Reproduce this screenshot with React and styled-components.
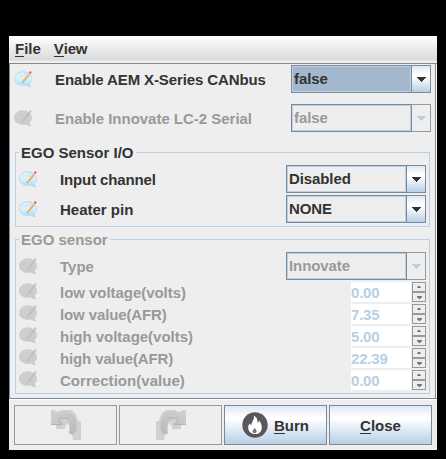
import React from "react";
import styled, { createGlobalStyle } from "styled-components";

const Global = createGlobalStyle`
  *{box-sizing:border-box}
  html,body{margin:0;background:#000}
  body{font:bold 15px/20px "Liberation Sans",Arial,sans-serif;color:#333;overflow:hidden}
`;
const Screen = styled.div`width:446px;height:459px;background:#000;padding:36px 9px 9px;overflow:hidden;`;
const Window = styled.main`width:428px;height:414px;background:#eee;display:flex;flex-direction:column;`;
const MenuBar = styled.nav`
  height:27px;flex:none;display:flex;gap:13px;padding:3px 0 0 6px;
  background:linear-gradient(#fff,#dadada 24px,#eee 25px);
`;
const Text = styled.span`
  white-space:nowrap;letter-spacing:${p => p.$ls || 0}px;color:${p => p.$off ? "#999" : "#333"};
`;
const Mnemonic = styled.span`border-bottom:1px solid #333;display:inline-block;line-height:15px;height:16px;`;
const Body = styled.section`
  width:428px;height:336px;flex:none;border:1px solid #7a8a99;border-right:0;
  box-shadow:inset -1px 0 #fff,inset -2px 0 #7a8a99,0 1px #fff;padding:1px 6px 0 4px;
`;
const Row = styled.div`
  display:flex;align-items:center;height:${p => p.$h || 28}px;margin-top:${p => p.$mt || 0}px;
`;
const IconCell = styled.div`width:41px;flex:none;display:flex;height:18px;margin-bottom:${p => p.$lift ? 2 : 0}px;`;
const Caption = styled.div`flex:1;display:flex;padding-top:2px;`;
const ComboBox = styled.div`
  width:140px;height:28px;flex:none;display:grid;grid-template-columns:120px 20px;
`;
const ComboValue = styled.div`
  border:1px solid #7a8a99;border-right:0;box-shadow:inset 0 0 0 1px #b8cfe5;
  background:${p => p.$focus ? "#a3b8cc" : "#eee"};color:${p => p.$off ? "#999" : "#333"};padding:3px 0 0 2px;
  letter-spacing:-.1px;
`;
const ComboArrow = styled.div`
  border:1px solid ${p => p.$off ? "#999" : "#7a8a99"};display:grid;place-items:center;
  border-left-color:#7a8a99;
  background:${p => p.$off ? "#eee" : "linear-gradient(#dde8f3,#fff 32%,#fff 42%,#b8cfe5)"};
`;
const Group = styled.fieldset`
  margin:${p => p.$mt}px 0 0 1px;min-width:0;width:415px;height:${p => p.$h}px;border:0;padding:0;
  display:flex;flex-direction:column;
`;
const GroupTop = styled.div`
  height:20px;flex:none;display:flex;align-items:center;gap:2px;
  &::before{content:"";width:4px;height:1px;background:#b8cfe5}
  &::after{content:"";flex:1;height:1px;background:#b8cfe5}
`;
const GroupTitle = styled(Text)`padding-top:2px;`;
const GroupBody = styled.div`
  border:1px solid #b8cfe5;border-top:0;flex:1;padding:0 3px;margin-top:-10px;
`;
const Field = styled.div`
  width:60px;height:20px;background:#fff;color:#b8cfe5;padding:1px 0 0 0;letter-spacing:-.2px;
`;
const Steps = styled.div`width:14px;height:20px;margin-left:1px;display:grid;grid-template-rows:10px 10px;`;
const Step = styled.div`border:1px solid #999;display:grid;place-items:center;`;
const Footer = styled.footer`display:flex;gap:2px;padding:5px 0 0 5px;margin-top:1px;`;
const Button = styled.div`
  width:103px;height:40px;display:flex;align-items:center;justify-content:center;gap:6px;
  border:1px solid ${p => p.$off ? "#999" : "#7a8a99"};
  background:${p => p.$off ? "#eee" : "linear-gradient(#dde8f3,#fff 30%,#fff 33%,#b8cfe5)"};
`;
const ButtonText = styled(Text)`padding-top:2px;`;

function NoteIcon({ off }) {
  const id = off ? "bubble-off" : "bubble-on";
  return (
    <svg width="18" height="18" viewBox="0 0 18 18">
      <defs>
        <linearGradient id={id} x1="0" y1="0" x2="0" y2="1">
          <stop offset="0" stopColor={off ? "#cdcdcd" : "#c5e3f0"} />
          <stop offset=".4" stopColor={off ? "#cfcfcf" : "#def3fb"} />
          <stop offset="1" stopColor={off ? "#c9c9c9" : "#a6dcf2"} />
        </linearGradient>
      </defs>
      <path d="M8.500 1.800C14 1.800 17.600 4.500 17.600 9c0 2.200-1 3.700-2.200 4.600.1 1.300.4 2.400 1.100 3.300-1.900-.1-3.200-.8-4.100-1.600C5.600 16.500.4 13.500.4 9 .4 4.500 4 1.800 8.500 1.800Z" fill={`url(#${id})`} stroke={off ? "#cbcbcb" : "#b3d9e8"} strokeWidth=".7" />
      <path d="M4 5c2-1.500 4-1.800 6-1.500" fill="none" stroke={off ? "#d5d5d5" : "#f5fcff"} />
      <path d="m8.500 12.400.9-2.700 4.400-5.300 1.600 1.200-4.500 5.300Z" fill={off ? "#bdbdbd" : "#eba641"} />
      <path d="m10 10 4.200-5.100" stroke={off ? "#c3c3c3" : "#ffd078"} strokeWidth=".7" />
      <path d="m13.800 4.400 1-1.300 1.600 1.200-1 1.300Z" fill={off ? "#bdbdbd" : "#c5ccd2"} />
      <path d="m14.800 2.900 1.300-1.900 1.600 1.300-1.300 1.800Z" fill={off ? "#bfbfbf" : "#df5265"} />
      <path d="M8 12h1v1H8Z" fill={off ? "#b4b4b4" : "#777"} />
    </svg>
  );
}

function TurnIcon({ flip }) {
  const id = flip ? "turn-right" : "turn-left";
  return (
    <svg width="30" height="30" viewBox="0 0 30 30">
      <defs>
        <linearGradient id={id} x1="0" y1="0" x2=".6" y2="1">
          <stop offset="0" stopColor="#d0d0d0" />
          <stop offset=".5" stopColor="#c6c6c6" />
          <stop offset="1" stopColor="#bcbcbc" />
        </linearGradient>
      </defs>
      <g transform={flip ? "translate(30 0) scale(-1 1)" : undefined}>
        <path d="M0 0h3l4 2 4-2h9l4 3 2 4 1 4h3v19h-8l-1-5-4-2 2-2-1-6-1-2-3 3v3H5v-4H0Z" fill="#d0d0d0" />
        <path d="M0 2 5 5c5-5 13-4 17 0 4 5 4 10 3 16l-3 4-4-2c1-5 1-11-2-13-2-2-6-2-7-1v2l3 3H0Z" fill={`url(#${id})`} />
        <path d="M18 8H8.500v3l3 3.500H0" fill="none" stroke="#b2b2b2" />
      </g>
    </svg>
  );
}

function FlameIcon() {
  return (
    <svg width="26" height="26" viewBox="0 0 26 26">
      <circle cx="13" cy="13" r="12.7" fill="#58585a" />
      <path d="M12 3.800c3.200 1.600 3.600 4.700 3.700 7.200.8-.6 1.200-1.400 1.200-2.500 2 2 2.900 4.500 2.900 6.900 0 4-2.900 6.700-6.700 6.700-4 0-6.900-2.600-6.900-6.300 0-2 .7-3.300 1.600-4.500.3 1 .8 1.700 1.600 2.100-.2-3.600 3.100-5.200 2.600-9.600Z" fill="#fff" />
      <path d="M12.600 15.500c.3 1.400 2 2.100 2 3.700 0 1.200-.9 2-2 2s-2.100-.8-2.100-2c0-.8.3-1.200.6-1.600.2.300.4.500.6.600 0-1 .6-1.600.9-2.700Z" fill="#77777a" />
    </svg>
  );
}

function Combo({ value, off, focus }) {
  return (
    <ComboBox>
      <ComboValue $off={off} $focus={focus}>{value}</ComboValue>
      <ComboArrow $off={off}>
        <svg width="10" height="5" viewBox="0 0 10 5" shapeRendering="crispEdges"><path d="M0 0h10L5 5Z" fill={off ? "#b8cfe5" : "#333"} /></svg>
      </ComboArrow>
    </ComboBox>
  );
}

function Setting({ label, off, h, mt, ls, children }) {
  return (
    <Row $h={h} $mt={mt}>
      <IconCell $lift={h === 20}><NoteIcon off={off} /></IconCell>
      <Caption><Text $off={off} $ls={ls}>{label}</Text></Caption>
      {children}
    </Row>
  );
}

function Spinner({ value }) {
  return (
    <>
      <Field>{value}</Field>
      <Steps>
        <Step><svg width="4" height="2"><path d="M0 2h4L3 0H1Z" fill="#777" /></svg></Step>
        <Step><svg width="5" height="3"><path d="M0 0h5v1L3 3H2L0 1Z" fill="#777" /></svg></Step>
      </Steps>
    </>
  );
}

const sensors = [
  ["low voltage(volts)", "0.00", -0.04],
  ["low value(AFR)", "7.35", -0.12],
  ["high voltage(volts)", "5.00", -0.02],
  ["high value(AFR)", "22.39", -0.13],
  ["Correction(value)", "0.00", 0.04],
];

export default function App() {
  return (
    <Screen>
      <Global />
      <Window>
        <MenuBar>
          <Text><Mnemonic>F</Mnemonic>ile</Text>
          <Text $ls={-0.2}><Mnemonic>V</Mnemonic>iew</Text>
        </MenuBar>
        <Body>
          <Setting label="Enable AEM X-Series CANbus" ls={-0.11}><Combo value="false" focus /></Setting>
          <Setting label="Enable Innovate LC-2 Serial" ls={-0.02} off mt={11}><Combo value="false" off /></Setting>
          <Group $mt={10} $h={85}>
            <GroupTop><GroupTitle>EGO Sensor I/O</GroupTitle></GroupTop>
            <GroupBody>
              <Setting label="Input channel" ls={-0.13} mt={13}><Combo value="Disabled" /></Setting>
              <Setting label="Heater pin" mt={2}><Combo value="NONE" /></Setting>
            </GroupBody>
          </Group>
          <Group $mt={2} $h={165}>
            <GroupTop><GroupTitle $off>EGO sensor</GroupTitle></GroupTop>
            <GroupBody>
              <Setting label="Type" off mt={13}><Combo value="Innovate" off /></Setting>
              {sensors.map(([label, value, ls]) => (
                <Setting key={label} label={label} ls={ls} off h={20} mt={2}><Spinner value={value} /></Setting>
              ))}
            </GroupBody>
          </Group>
        </Body>
        <Footer>
          <Button $off><TurnIcon /></Button>
          <Button $off><TurnIcon flip /></Button>
          <Button><FlameIcon /><ButtonText><Mnemonic>B</Mnemonic>urn</ButtonText></Button>
          <Button><ButtonText><Mnemonic>C</Mnemonic>lose</ButtonText></Button>
        </Footer>
      </Window>
    </Screen>
  );
}
